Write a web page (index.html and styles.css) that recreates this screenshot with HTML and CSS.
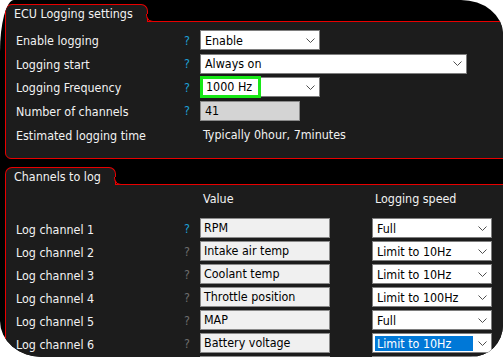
FILE: index.html
```html
<!DOCTYPE html>
<html lang="en">
<head>
    <meta charset="UTF-8">
    <meta name="viewport" content="width=device-width, initial-scale=1.0">
    <title>ECU Logging settings</title>
    <link rel="stylesheet" href="styles.css">
</head>
<body>
    <div class="screen">
        <section class="group">
            <div class="tab">ECU Logging settings</div>
            <div class="group-body">
                <div class="form">
                    <div class="label">Enable logging</div>
                    <span class="help">?</span>
                    <div class="select w120"><span class="value">Enable</span><svg class="chev" width="9" height="5" viewBox="0 0 9 5"><path d="M0.5 0.5 L4.5 4.5 L8.5 0.5" /></svg></div>

                    <div class="label">Logging start</div>
                    <span class="help">?</span>
                    <div class="select w267"><span class="value">Always on</span><svg class="chev" width="9" height="5" viewBox="0 0 9 5"><path d="M0.5 0.5 L4.5 4.5 L8.5 0.5" /></svg></div>

                    <div class="label">Logging Frequency</div>
                    <span class="help">?</span>
                    <div class="select combo w120"><span class="combo-text">1000 Hz</span><svg class="chev" width="9" height="5" viewBox="0 0 9 5"><path d="M0.5 0.5 L4.5 4.5 L8.5 0.5" /></svg></div>

                    <div class="label">Number of channels</div>
                    <span class="help">?</span>
                    <div class="field readonly w100">41</div>

                    <div class="label">Estimated logging time</div>
                    <span></span>
                    <div class="plain">Typically 0hour, 7minutes</div>
                </div>
            </div>
        </section>

        <section class="group">
            <div class="tab">Channels to log</div>
            <div class="group-body">
                <div class="channels">
                    <div></div>
                    <div></div>
                    <div class="col-head">Value</div>
                    <div></div>
                    <div class="col-head">Logging speed</div>

                    <div class="label">Log channel 1</div>
                    <span class="help">?</span>
                    <div class="field">RPM</div>
                    <div></div>
                    <div class="select w120"><span class="value">Full</span><svg class="chev" width="9" height="5" viewBox="0 0 9 5"><path d="M0.5 0.5 L4.5 4.5 L8.5 0.5" /></svg></div>

                    <div class="label">Log channel 2</div>
                    <span class="help off">?</span>
                    <div class="field">Intake air temp</div>
                    <div></div>
                    <div class="select w120"><span class="value">Limit to 10Hz</span><svg class="chev" width="9" height="5" viewBox="0 0 9 5"><path d="M0.5 0.5 L4.5 4.5 L8.5 0.5" /></svg></div>

                    <div class="label">Log channel 3</div>
                    <span class="help off">?</span>
                    <div class="field">Coolant temp</div>
                    <div></div>
                    <div class="select w120"><span class="value">Limit to 10Hz</span><svg class="chev" width="9" height="5" viewBox="0 0 9 5"><path d="M0.5 0.5 L4.5 4.5 L8.5 0.5" /></svg></div>

                    <div class="label">Log channel 4</div>
                    <span class="help off">?</span>
                    <div class="field">Throttle position</div>
                    <div></div>
                    <div class="select w120"><span class="value">Limit to 100Hz</span><svg class="chev" width="9" height="5" viewBox="0 0 9 5"><path d="M0.5 0.5 L4.5 4.5 L8.5 0.5" /></svg></div>

                    <div class="label">Log channel 5</div>
                    <span class="help off">?</span>
                    <div class="field">MAP</div>
                    <div></div>
                    <div class="select w120"><span class="value">Full</span><svg class="chev" width="9" height="5" viewBox="0 0 9 5"><path d="M0.5 0.5 L4.5 4.5 L8.5 0.5" /></svg></div>

                    <div class="label">Log channel 6</div>
                    <span class="help off">?</span>
                    <div class="field">Battery voltage</div>
                    <div></div>
                    <div class="select w120 focused"><span class="value">Limit to 10Hz</span><svg class="chev" width="9" height="5" viewBox="0 0 9 5"><path d="M0.5 0.5 L4.5 4.5 L8.5 0.5" /></svg></div>

                    <div></div>
                    <div></div>
                    <div class="field"></div>
                    <div></div>
                    <div class="select w120"></div>
                </div>
            </div>
        </section>
    </div>
</body>
</html>
```

FILE: styles.css
```css
* {
    margin: 0;
    padding: 0;
    box-sizing: border-box;
}

body {
    background: #fff;
    font-family: "DejaVu Sans Condensed", "DejaVu Sans", sans-serif;
    font-size: 12.4px;
    color: #f2f2f2;
}

.screen {
    width: 503px;
    height: 357px;
    overflow: hidden;
    background: #000;
    padding: 4px 0 0 5px;
    border-radius: 14px 42px 32px 42px / 52px 34px 32px 36px;
}

.group + .group {
    margin-top: 8px;
}

.tab {
    position: relative;
    width: fit-content;
    height: 18px;
    margin-bottom: -1px;
    padding: 1px 14px 0 8px;
    line-height: 15px;
    background: #1c1c1c;
    border: 1px solid #e80000;
    border-bottom: none;
    border-radius: 7px 7px 0 0;
    z-index: 1;
}

.tab::after {
    content: '';
    position: absolute;
    right: -8px;
    bottom: 0;
    width: 8px;
    height: 7px;
    border-left: 1px solid #e80000;
    border-bottom: 1px solid #e80000;
    border-bottom-left-radius: 7px;
    background: #000;
}

.group-body {
    margin-right: -20px;
    background: #1c1c1c;
    border: 1px solid #e80000;
    border-radius: 0 0 0 6px;
    padding: 8px 10px 13px 10px;
}

.form {
    display: grid;
    grid-template-columns: 167px 17px auto;
    grid-auto-rows: 20px;
    row-gap: 3.67px;
    align-items: center;
    justify-items: start;
}

.form .label {
    padding-top: 1px;
}

.channels {
    display: grid;
    grid-template-columns: 167px 17px 130px 42px 120px;
    grid-template-rows: 26.7px;
    grid-auto-rows: 20px;
    row-gap: 3px;
    align-items: center;
    justify-items: start;
    margin-top: -4px;
}

.channels .col-head {
    align-self: start;
    line-height: 20px;
    padding-left: 3px;
}

.channels .label {
    padding-top: 2px;
}

.label {
    white-space: nowrap;
}

.help {
    color: #1ea0d6;
    padding-left: 1px;
}

.help.off {
    color: #6e6e6e;
}

.select {
    height: 20px;
    display: flex;
    align-items: center;
    justify-content: space-between;
    background: #fff;
    border: 1px solid #7e7e7e;
    color: #000;
    padding: 0 4px 0 4px;
}

.w120 { width: 120px; }
.w267 { width: 267px; }
.w100 { width: 100px; }

.chev path {
    fill: none;
    stroke: #505050;
    stroke-width: 1;
}

.select.focused {
    padding-left: 2px;
}

.select.focused .value {
    width: 98px;
    height: 15px;
    line-height: 15px;
    padding-left: 2px;
    background: #0078d7;
    color: #fff;
}

.combo {
    padding-left: 0;
}

.combo .combo-text {
    width: 61px;
    height: 22px;
    margin: -1px 0 0 -1px;
    line-height: 16px;
    padding-left: 3px;
    border: 3px solid #17e817;
    background: #fff;
}

.field {
    width: 130px;
    height: 20px;
    line-height: 18px;
    padding-left: 3px;
    background: #f0f0f0;
    border: 1px solid #8a8a8a;
    color: #000;
    white-space: nowrap;
    overflow: hidden;
}

.field.readonly {
    width: 100px;
    background: #d4d4d4;
    padding-left: 4px;
}

.plain {
    padding-left: 3px;
}
```
